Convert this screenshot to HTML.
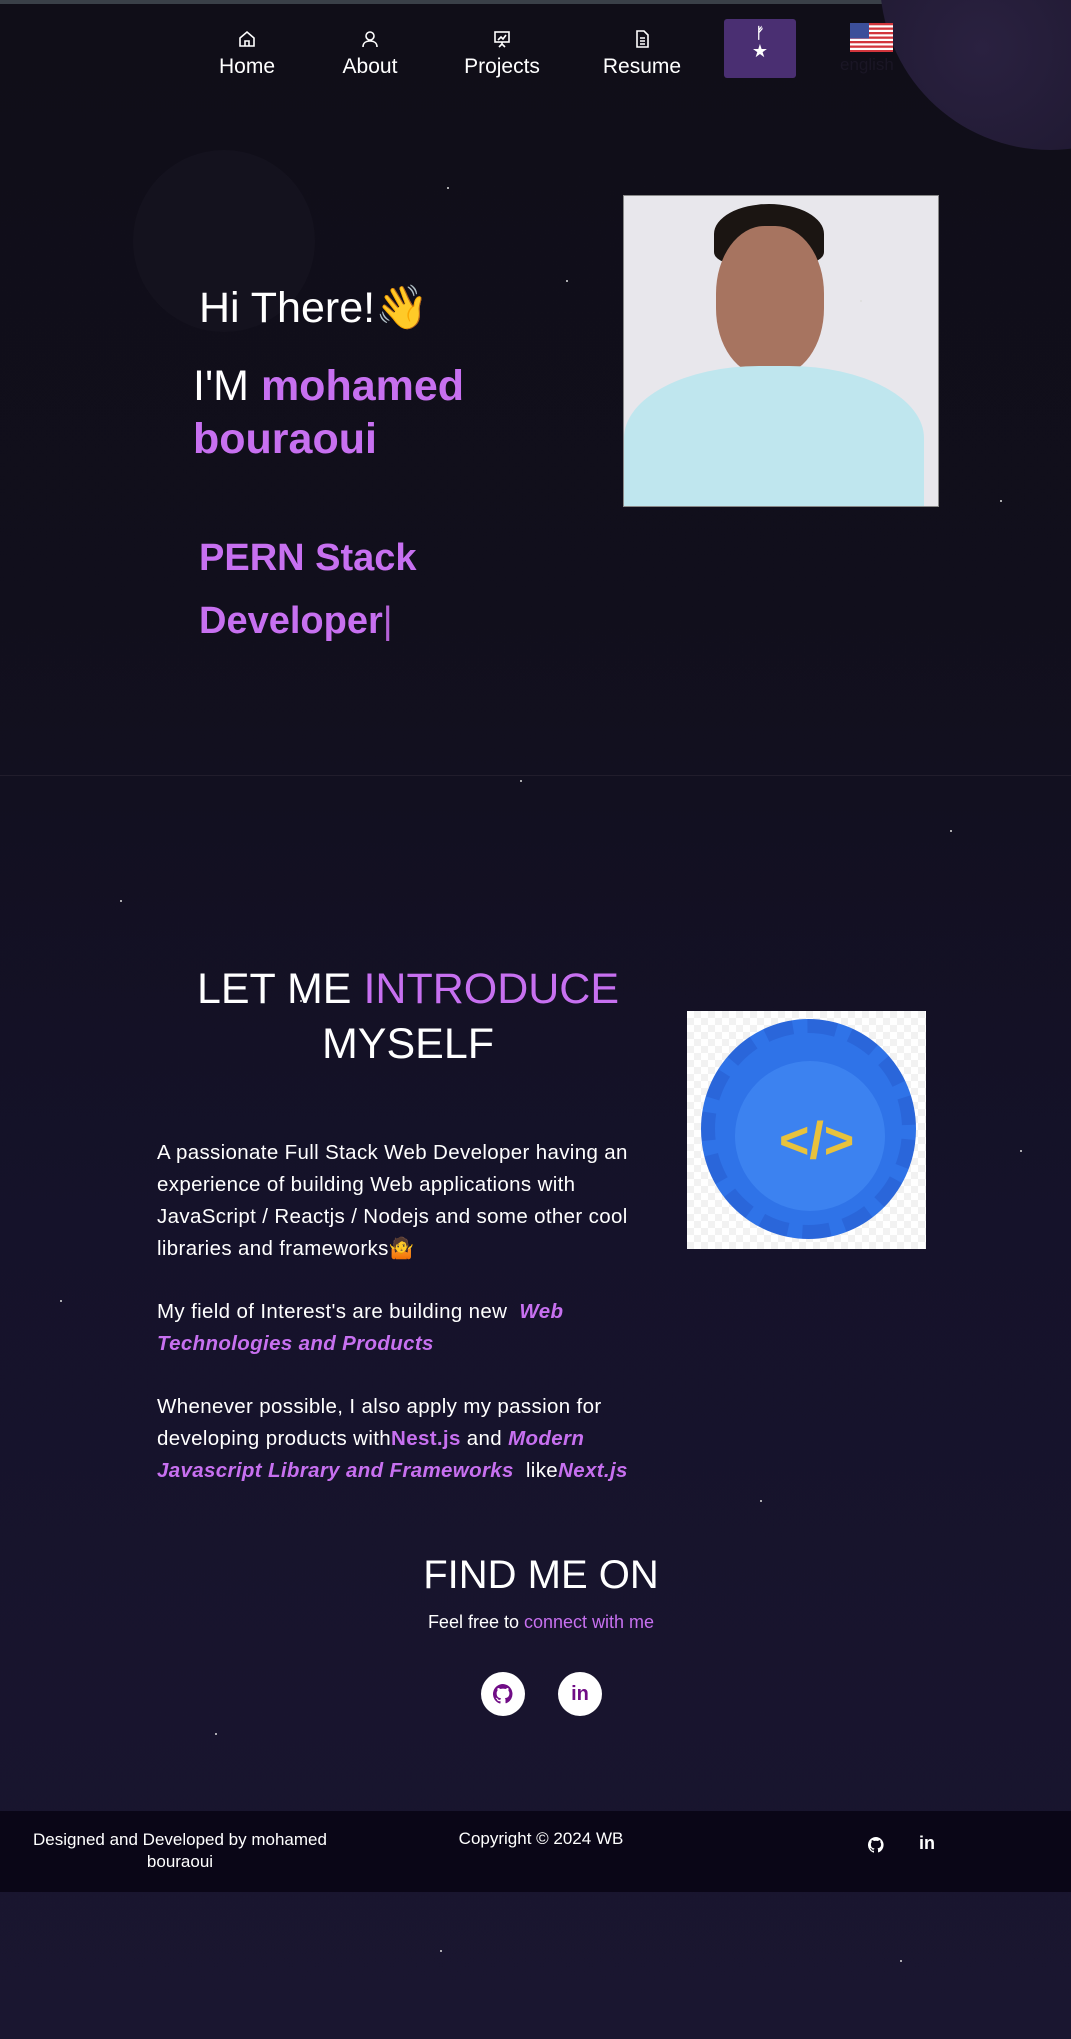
<!DOCTYPE html>
<html><head><meta charset="utf-8"><style>
*{margin:0;padding:0;box-sizing:border-box}
body{width:1071px;height:2039px;overflow:hidden;font-family:"Liberation Sans",sans-serif;color:#fff;position:relative;
background:linear-gradient(180deg,#100e18 0%,#110f1c 30%,#15122a 60%,#1a1630 100%)}
.a{position:absolute}
.p{color:#c770f0}
.nav{font-size:21px;text-align:center;width:140px;margin-left:-70px;top:56px}
.nav svg{display:block;margin:0 auto 6px}
.txt{font-size:20.5px;line-height:32px;left:157px;width:505px;letter-spacing:0.35px}
.soc{width:44px;height:44px;border-radius:50%;background:#fff;top:1672px;display:flex;align-items:center;justify-content:center;color:#700c86;font-weight:bold;font-size:20px}
.star{width:2px;height:2px;background:#ddd;border-radius:50%}
</style></head><body>
<div class="a" style="top:0;left:0;width:1071px;height:4px;background:#3a4048"></div>
<div class="a" style="left:880px;top:-190px;width:340px;height:340px;border-radius:50%;background:radial-gradient(circle at 30% 70%,#2a2140,#1a152a 70%,transparent 71%)"></div>
<div class="a" style="left:133px;top:150px;width:182px;height:182px;border-radius:50%;background:#14121e"></div>

<div class="a nav" style="left:247px;top:29px"><svg width="20" height="20" viewBox="0 0 20 20" fill="none" stroke="#fff" stroke-width="1.6"><path d="M3 9L10 3l7 6v8H3z M8 17v-5h4v5"/></svg>Home</div>
<div class="a nav" style="left:370px;top:29px"><svg width="20" height="20" viewBox="0 0 20 20" fill="none" stroke="#fff" stroke-width="1.6"><circle cx="10" cy="7" r="4"/><path d="M3 18c0-4 3-6 7-6s7 2 7 6"/></svg>About</div>
<div class="a nav" style="left:502px;top:29px"><svg width="20" height="20" viewBox="0 0 20 20" fill="none" stroke="#fff" stroke-width="1.6"><rect x="3" y="3" width="14" height="10"/><path d="M6 11l3-3 2 2 3-4M10 13v2M7 18l3-3 3 3"/></svg>Projects</div>
<div class="a nav" style="left:642px;top:29px"><svg width="20" height="20" viewBox="0 0 20 20" fill="none" stroke="#fff" stroke-width="1.6"><path d="M5 2h7l4 4v12H5z M8 9h5M8 12h5M8 15h5"/></svg>Resume</div>
<div class="a" style="left:724px;top:19px;width:72px;height:59px;background:#4a2f72;border-radius:3px;text-align:center;color:#fff">
<div style="font-size:15px;margin-top:6px;font-weight:bold">ᚠ</div><div style="font-size:18px;line-height:18px">★</div></div>
<svg class="a" style="left:850px;top:23px" width="43" height="29" viewBox="0 0 43 29"><rect width="43" height="29" fill="#fff"/><g fill="#d2353c"><rect y="0" width="43" height="2.3"/><rect y="4.5" width="43" height="2.3"/><rect y="9" width="43" height="2.3"/><rect y="13.5" width="43" height="2.3"/><rect y="18" width="43" height="2.3"/><rect y="22.5" width="43" height="2.3"/><rect y="27" width="43" height="2"/></g><rect width="19" height="15.5" fill="#3c4f9a"/></svg>
<div class="a" style="left:840px;top:55px;font-size:17px;color:#1a1625">english</div>

<div class="a" style="left:199px;top:283px;font-size:43px">Hi There!👋</div>
<div class="a" style="left:193px;top:360px;font-size:43px;line-height:53px;font-weight:bold"><span style="font-weight:normal">I'M </span><span class="p">mohamed<br>bouraoui</span></div>
<div class="a p" style="left:199px;top:527px;font-size:38px;line-height:63px;font-weight:bold">PERN Stack<br>Developer<span style="font-weight:normal;color:#b562d6">|</span></div>

<div class="a" style="left:623px;top:195px;width:316px;height:312px;background:#e8e7ec;border:1px solid #888;overflow:hidden">
<div class="a" style="left:90px;top:8px;width:110px;height:60px;border-radius:50% 50% 20% 20%;background:#1b1512"></div>
<div class="a" style="left:92px;top:30px;width:108px;height:150px;border-radius:45%;background:#a77460"></div>
<div class="a" style="left:0;top:170px;width:300px;height:160px;border-radius:45% 45% 0 0;background:#bfe6ee"></div>
</div>

<div class="a" style="left:0;top:775px;width:1071px;height:1px;background:#211d2c"></div>

<div class="a" style="left:108px;top:962px;width:600px;text-align:center;font-size:43px;line-height:55px">LET ME <span class="p">INTRODUCE</span><br>MYSELF</div>

<div class="a" style="left:687px;top:1011px;width:239px;height:238px;background:repeating-conic-gradient(#f2f2f2 0 25%,#fff 0 50%) 0 0/14px 14px">
<div class="a" style="left:14px;top:8px;width:215px;height:220px;border-radius:50%;background:#2f73e8;border:14px dashed #2a66da"></div>
<div class="a" style="left:48px;top:50px;width:150px;height:150px;border-radius:50%;background:#3c82f0"></div>
<div class="a" style="left:92px;top:100px;font-size:52px;font-weight:bold;color:#e8c23c">&lt;/&gt;</div>
</div>

<div class="a txt" style="top:1137px">A passionate Full Stack Web Developer having an experience of building Web applications with JavaScript / Reactjs / Nodejs and some other cool libraries and frameworks🤷</div>
<div class="a txt" style="top:1296px">My field of Interest's are building new &nbsp;<i class="p" style="font-weight:bold">Web Technologies and Products</i></div>
<div class="a txt" style="top:1391px">Whenever possible, I also apply my passion for developing products with<b class="p">Nest.js</b> and <i class="p" style="font-weight:bold">Modern Javascript Library and Frameworks</i> &nbsp;like<i class="p" style="font-weight:bold">Next.js</i></div>

<div class="a" style="left:341px;top:1553px;width:400px;text-align:center;font-size:40px">FIND ME ON</div>
<div class="a" style="left:341px;top:1612px;width:400px;text-align:center;font-size:18px">Feel free to <span class="p">connect with me</span></div>
<div class="a soc" style="left:481px"><svg width="20" height="20" viewBox="0 0 16 16" fill="#700c86"><path d="M8 0a8 8 0 00-2.5 15.6c.4 0 .5-.2.5-.4v-1.5c-2.2.5-2.7-1-2.7-1-.4-.9-.9-1.200-.9-1.2-.7-.5.1-.5.1-.5.8.1 1.2.8 1.2.8.7 1.3 1.9.9 2.3.7.1-.5.3-.9.5-1.100-1.8-.2-3.6-.9-3.600-4 0-.9.3-1.6.8-2.1-.1-.2-.4-1 .1-2.1 0 0 .7-.2 2.2.8a7.5 7.5 0 014 0c1.5-1 2.2-.8 2.2-.8.4 1.1.2 1.9.1 2.1.5.6.8 1.3.8 2.1 0 3.1-1.9 3.7-3.6 3.9.3.3.5.8.5 1.5v2.2c0 .2.1.5.6.4A8 8 0 008 0z"/></svg></div>
<div class="a soc" style="left:558px">in</div>

<div class="a" style="left:0;top:1811px;width:1071px;height:81px;background:#0a0617"></div>
<div class="a" style="left:10px;top:1829px;width:340px;text-align:center;font-size:17px;line-height:22px">Designed and Developed by mohamed bouraoui</div>
<div class="a" style="left:391px;top:1829px;width:300px;text-align:center;font-size:17px">Copyright © 2024 WB</div>
<svg class="a" style="left:868px;top:1837px" width="16" height="16" viewBox="0 0 16 16" fill="#fff"><path d="M8 0a8 8 0 00-2.5 15.6c.4 0 .5-.2.5-.4v-1.5c-2.2.5-2.7-1-2.7-1-.4-.9-.9-1.2-.9-1.2-.7-.5.1-.5.1-.5.8.1 1.2.8 1.2.8.7 1.3 1.9.9 2.3.7.1-.5.3-.9.5-1.1-1.8-.2-3.6-.9-3.6-4 0-.9.3-1.6.8-2.1-.1-.2-.4-1 .1-2.1 0 0 .7-.2 2.2.8a7.5 7.5 0 014 0c1.5-1 2.2-.8 2.2-.8.4 1.1.2 1.9.1 2.1.5.6.8 1.3.8 2.1 0 3.1-1.900 3.7-3.6 3.9.3.3.5.8.5 1.5v2.2c0 .2.1.5.6.4A8 8 0 008 0z"/></svg>
<div class="a" style="left:919px;top:1833px;font-size:18px;font-weight:bold">in</div>

<div class="a star" style="left:447px;top:187px"></div><div class="a star" style="left:566px;top:280px"></div>
<div class="a star" style="left:1000px;top:500px"></div><div class="a star" style="left:860px;top:300px"></div>
<div class="a star" style="left:120px;top:900px"></div><div class="a star" style="left:950px;top:830px"></div>
<div class="a star" style="left:300px;top:1000px"></div><div class="a star" style="left:1020px;top:1150px"></div>
<div class="a star" style="left:60px;top:1300px"></div><div class="a star" style="left:760px;top:1500px"></div>
<div class="a star" style="left:215px;top:1733px"></div><div class="a star" style="left:900px;top:1960px"></div>
<div class="a star" style="left:440px;top:1950px"></div><div class="a star" style="left:520px;top:780px"></div>
</body></html>
